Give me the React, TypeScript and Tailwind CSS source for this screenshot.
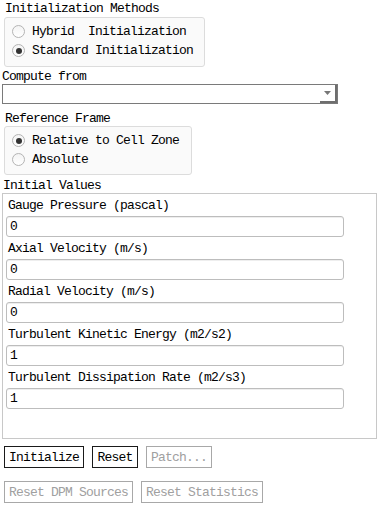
import React from "react";

const font = { fontFamily: '"Liberation Mono", "DejaVu Sans Mono", monospace' };

function Radio({ checked, label }: { checked: boolean; label: string }) {
  return (
    <div className="flex h-[19px] items-center">
      <span className="relative flex h-[13px] w-[13px] items-center justify-center rounded-full border border-[#b4b4b4] bg-gradient-to-b from-[#f4f4f4] to-white">
        {checked && <span className="h-[6px] w-[6px] rounded-full bg-[#333]" />}
      </span>
      <span className="ml-[7px] whitespace-pre pt-[1px]">{label}</span>
    </div>
  );
}

function Field({ label, value }: { label: string; value: string }) {
  return (
    <div className="flex flex-col">
      <div className="h-[22px] pl-[5px] pt-[4px] leading-[16px]">{label}</div>
      <div className="ml-[3px] flex h-[21px] w-[338px] items-center rounded-[3px] border border-[#bdbdbd] bg-white pl-[3px] pt-[1px] leading-[16px] shadow-[inset_0_1px_0_#eee]">
        {value}
      </div>
    </div>
  );
}

function Btn({ label, w, disabled }: { label: string; w: string; disabled?: boolean }) {
  return (
    <div
      className={
        "flex h-[22px] items-center justify-center border bg-white pt-[1px] leading-[16px] " +
        w +
        (disabled ? " border-[#a8a8a8] text-[#a0a0a0]" : " border-[#1a1a1a] text-black")
      }
    >
      {label}
    </div>
  );
}

export default function App() {
  return (
    <div
      className="h-[509px] w-[384px] overflow-hidden bg-white text-[13px] tracking-[-0.8px] text-black"
      style={font}
    >
      <div className="h-[17px] pl-[5px] pt-[1px] leading-[16px]">Initialization Methods</div>
      <div className="ml-[4px] h-[50px] w-[201px] rounded-[3px] border border-[#dcdcdc] bg-[#fafafa] pl-[7px] pt-[4px]">
        <Radio checked={false} label="Hybrid  Initialization" />
        <Radio checked={true} label="Standard Initialization" />
      </div>
      <div className="h-[17px] pl-[2px] pt-[2px] leading-[16px]">Compute from</div>
      <div className="ml-[2px] flex h-[20px] w-[336px] border border-[#7a7a7a] bg-white">
        <div className="flex-1" />
        <div className="flex w-[17px] items-center justify-center border-b-2 border-r-2 border-[#6e6e6e] bg-white">
          <svg width="7" height="4" viewBox="0 0 7 4">
            <path d="M0 0 H7 L3.5 4 Z" fill="#777" />
          </svg>
        </div>
      </div>
      <div className="h-[22px] pl-[5px] pt-[7px] leading-[16px]">Reference Frame</div>
      <div className="ml-[4px] h-[49px] w-[188px] rounded-[3px] border border-[#dcdcdc] bg-[#fafafa] pl-[7px] pt-[4px]">
        <Radio checked={true} label="Relative to Cell Zone" />
        <Radio checked={false} label="Absolute" />
      </div>
      <div className="h-[18px] pl-[3px] pt-[4px] leading-[14px]">Initial Values</div>
      <div className="ml-[2px] h-[246px] w-[375px] border border-[#c8c8c8] bg-white">
        <Field label="Gauge Pressure (pascal)" value="0" />
        <Field label="Axial Velocity (m/s)" value="0" />
        <Field label="Radial Velocity (m/s)" value="0" />
        <Field label="Turbulent Kinetic Energy (m2/s2)" value="1" />
        <Field label="Turbulent Dissipation Rate (m2/s3)" value="1" />
      </div>
      <div className="ml-[4px] mt-[7px] flex gap-[8px]">
        <Btn label="Initialize" w="w-[80px]" />
        <Btn label="Reset" w="w-[46px]" />
        <Btn label="Patch..." w="w-[66px]" disabled />
      </div>
      <div className="ml-[4px] mt-[13px] flex gap-[8px]">
        <Btn label="Reset DPM Sources" w="w-[129px]" disabled />
        <Btn label="Reset Statistics" w="w-[122px]" disabled />
      </div>
    </div>
  );
}
